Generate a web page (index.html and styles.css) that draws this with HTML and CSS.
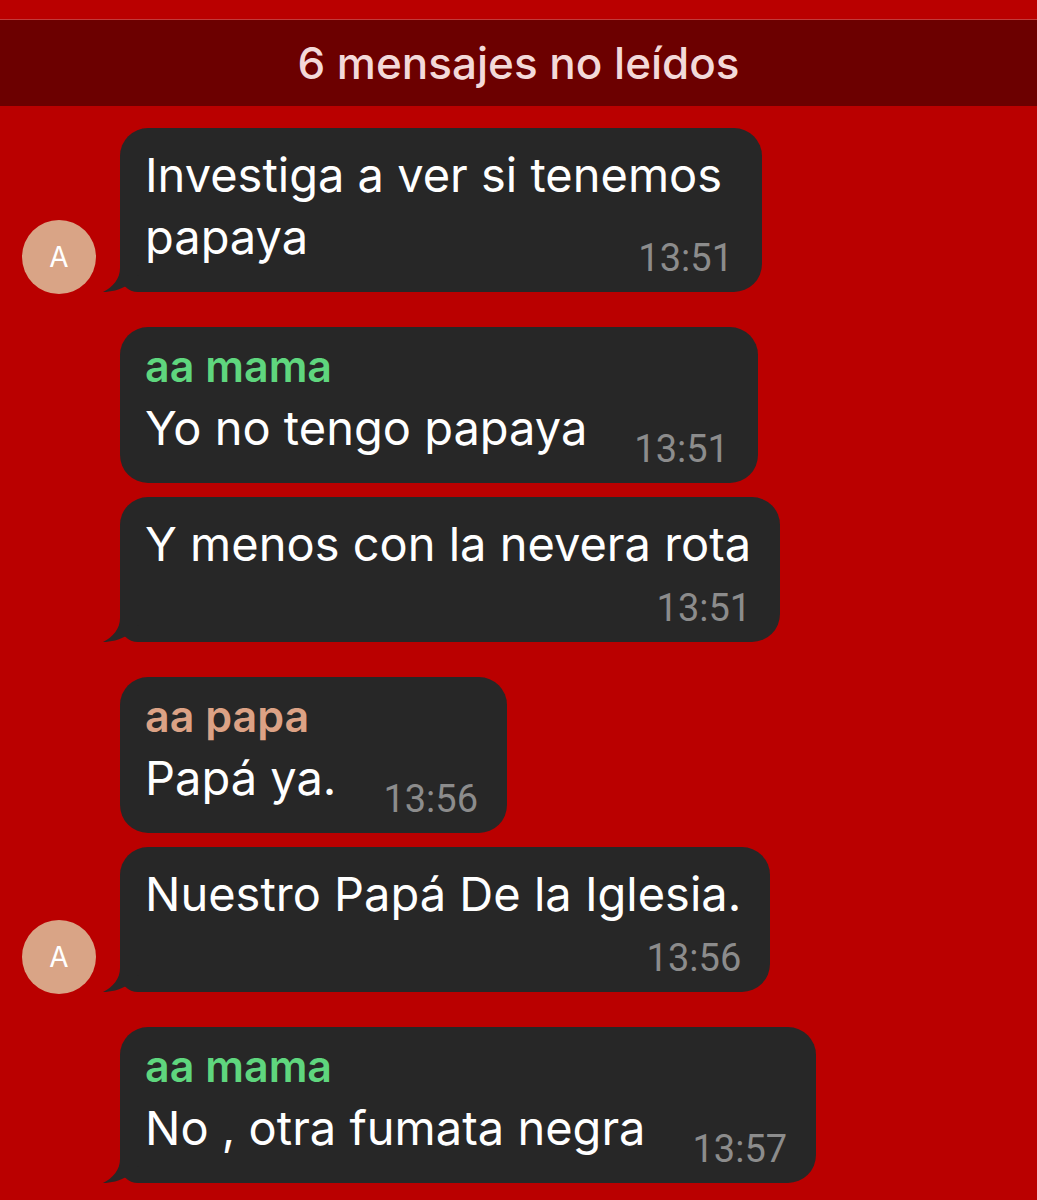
FILE: index.html
```html
<!DOCTYPE html>
<html lang="es">

<head>
    <meta charset="UTF-8">
    <title>Chat</title>
    <link rel="stylesheet" href="styles.css">
</head>

<body>
    <div class="chat">
        <div class="unread-bar">6 mensajes no leídos</div>

        <div class="messages">
            <div class="group">
                <div class="row">
                    <div class="avatar-slot"><div class="avatar">A</div></div>
                    <div class="bubble bubble--tail bubble--wide">
                        <svg class="tail" viewBox="0 0 40 30" width="40" height="30"><path d="M18 0 L18 6 C18 17 11 25 1 30 C9 30 17 28 26 23 L40 10 L40 0 Z" /></svg>
                        <div class="text">Investiga a ver si tenemos papaya<span class="time">13:51</span></div>
                    </div>
                </div>
            </div>

            <div class="group">
                <div class="row">
                    <div class="avatar-slot"></div>
                    <div class="bubble">
                        <div class="name name--green">aa mama</div>
                        <div class="text">Yo no tengo papaya<span class="time">13:51</span></div>
                    </div>
                </div>
                <div class="row">
                    <div class="avatar-slot"></div>
                    <div class="bubble bubble--tail">
                        <svg class="tail" viewBox="0 0 40 30" width="40" height="30"><path d="M18 0 L18 6 C18 17 11 25 1 30 C9 30 17 28 26 23 L40 10 L40 0 Z" /></svg>
                        <div class="text">Y menos con la nevera rota</div>
                        <div class="time time--below">13:51</div>
                    </div>
                </div>
            </div>

            <div class="group">
                <div class="row">
                    <div class="avatar-slot"></div>
                    <div class="bubble">
                        <div class="name name--peach">aa papa</div>
                        <div class="text">Papá ya.<span class="time">13:56</span></div>
                    </div>
                </div>
                <div class="row">
                    <div class="avatar-slot"><div class="avatar">A</div></div>
                    <div class="bubble bubble--tail">
                        <svg class="tail" viewBox="0 0 40 30" width="40" height="30"><path d="M18 0 L18 6 C18 17 11 25 1 30 C9 30 17 28 26 23 L40 10 L40 0 Z" /></svg>
                        <div class="text">Nuestro Papá De la Iglesia.</div>
                        <div class="time time--below">13:56</div>
                    </div>
                </div>
            </div>

            <div class="group">
                <div class="row">
                    <div class="avatar-slot"></div>
                    <div class="bubble bubble--tail">
                        <svg class="tail" viewBox="0 0 40 30" width="40" height="30"><path d="M18 0 L18 6 C18 17 11 25 1 30 C9 30 17 28 26 23 L40 10 L40 0 Z" /></svg>
                        <div class="name name--green">aa mama</div>
                        <div class="text">No , otra fumata negra<span class="time">13:57</span></div>
                    </div>
                </div>
            </div>
        </div>
    </div>
</body>

</html>
```

FILE: styles.css
```css
body {
    margin: 0;
    font-family: 'Inter', 'Liberation Sans', sans-serif;
    background: #ba0000;
    overflow: hidden;
}

.chat {
    padding-top: 19px;
}

.unread-bar {
    height: 86px;
    line-height: 86px;
    border-top: 1px solid #c23b3b;
    background: #6c0000;
    color: #f3d9d9;
    font-size: 44px;
    font-weight: 500;
    text-align: center;
}

.messages {
    padding-top: 22px;
}

.group + .group {
    margin-top: 35px;
}

.row {
    display: flex;
    align-items: flex-end;
}

.row + .row {
    margin-top: 14px;
}

.avatar-slot {
    width: 120px;
    flex-shrink: 0;
}

.avatar {
    width: 74px;
    height: 74px;
    margin-left: 22px;
    margin-bottom: -2px;
    border-radius: 50%;
    background: #d9a486;
    color: #fff;
    font-size: 28px;
    line-height: 74px;
    text-align: center;
}

.bubble {
    position: relative;
    box-sizing: border-box;
    padding: 16px 29px 15px 25px;
    background: #272727;
    border-radius: 28px;
    color: #fff;
}

.bubble--tail {
    border-bottom-left-radius: 18px;
}

.bubble--wide {
    width: 642px;
}

.tail {
    position: absolute;
    left: -18px;
    bottom: 0;
    fill: #272727;
}

.name {
    font-size: 43px;
    font-weight: 600;
    line-height: 46px;
    margin-bottom: 8px;
}

.name--green {
    color: #5fd67e;
}

.name--peach {
    color: #dca285;
}

.text {
    font-size: 47px;
    line-height: 62px;
}

.time {
    float: right;
    margin: 33px 0 0 47px;
    color: #8c8c8c;
    font-family: 'Roboto', 'Liberation Sans', sans-serif;
    font-size: 38px;
    line-height: 38px;
}

.time--below {
    float: none;
    display: block;
    text-align: right;
    margin: 14px 0 0;
}
```
